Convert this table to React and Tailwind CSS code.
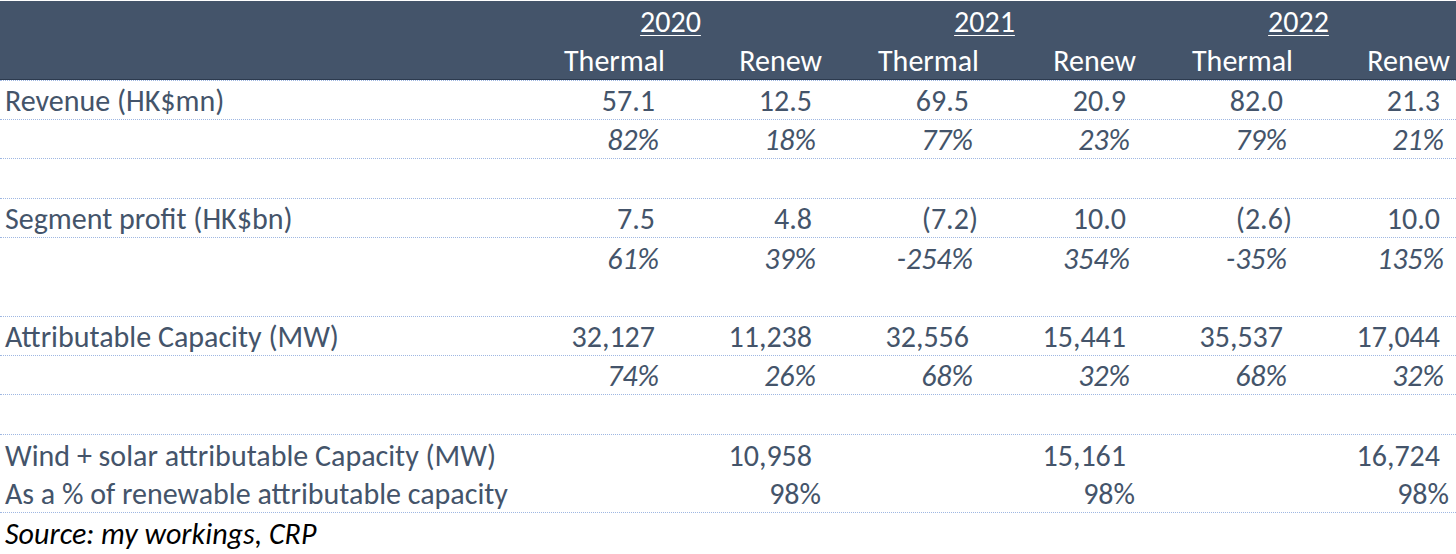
import React from "react";

const rows = [
  { label: "Revenue (HK$mn)", kind: "num", vals: ["57.1", "12.5", "69.5", "20.9", "82.0", "21.3"], line: true },
  { label: "", kind: "pct", vals: ["82%", "18%", "77%", "23%", "79%", "21%"], line: true },
  { label: "", kind: "blank", vals: [], line: true },
  { label: "Segment profit (HK$bn)", kind: "num", vals: ["7.5", "4.8", "(7.2)", "10.0", "(2.6)", "10.0"], line: true },
  { label: "", kind: "pct", vals: ["61%", "39%", "-254%", "354%", "-35%", "135%"], line: false },
  { label: "", kind: "blank", vals: [], line: true },
  { label: "Attributable Capacity (MW)", kind: "num", vals: ["32,127", "11,238", "32,556", "15,441", "35,537", "17,044"], line: true },
  { label: "", kind: "pct", vals: ["74%", "26%", "68%", "32%", "68%", "32%"], line: true },
  { label: "", kind: "blank", vals: [], line: true },
  { label: "Wind + solar attributable Capacity (MW)", kind: "num", vals: ["", "10,958", "", "15,161", "", "16,724"], line: false },
  { label: "As a % of renewable attributable capacity", kind: "plain", vals: ["", "98%", "", "98%", "", "98%"], line: true },
];

const grid = "grid grid-cols-[510px_repeat(6,157px)] h-[39.36px] items-end";

const cellPad = (kind, v) => {
  if (kind === "pct") return "pr-[8px] italic";
  if (kind === "plain") return "pr-[3px]";
  if (v.startsWith("(")) return "pr-[3px]";
  return "pr-[12px]";
};

const Row = ({ row }) => (
  <div
    className={`${grid} ${row.line ? "border-b border-dotted border-[#9fb7e2]" : ""}`}
  >
    <div className="pl-[5px] pb-[3px] whitespace-nowrap">{row.label}</div>
    {row.kind !== "blank" &&
      row.vals.map((v, i) => (
        <div key={i} className={`text-right pb-[3px] ${cellPad(row.kind, v)}`}>
          {v}
        </div>
      ))}
  </div>
);

export default function App() {
  return (
    <div
      className="w-[1456px] h-[554px] bg-white pt-px text-[#44546a] text-[30px] leading-[30px] overflow-hidden"
      style={{ fontFamily: "Carlito, 'Open Sans', sans-serif" }}
    >
      {/* Header band */}
      <div className="bg-[#44546a] text-white border-b border-[#2c3a4e]">
        <div className="grid grid-cols-[510px_repeat(6,157px)] h-[39px] items-end">
          <div />
          {["2020", "2021", "2022"].map((y) => (
            <div key={y} className="col-span-2 text-center pl-[7px] pb-[3px]">
              <span className="underline decoration-1 underline-offset-[3px]">{y}</span>
            </div>
          ))}
        </div>
        <div className="grid grid-cols-[510px_repeat(6,157px)] h-[38.5px] items-end">
          <div />
          {["Thermal", "Renew", "Thermal", "Renew", "Thermal", "Renew"].map((h, i) => (
            <div key={i} className="text-right pr-[2px] pb-[3px]">
              {h}
            </div>
          ))}
        </div>
      </div>
      <div className="border-b border-dotted border-[#9fb7e2]" />

      {rows.map((r, i) => (
        <Row key={i} row={r} />
      ))}

      <div className="h-[39px] flex items-end pl-[5px] pb-[3px] italic text-black">
        Source: my workings, CRP
      </div>
    </div>
  );
}
